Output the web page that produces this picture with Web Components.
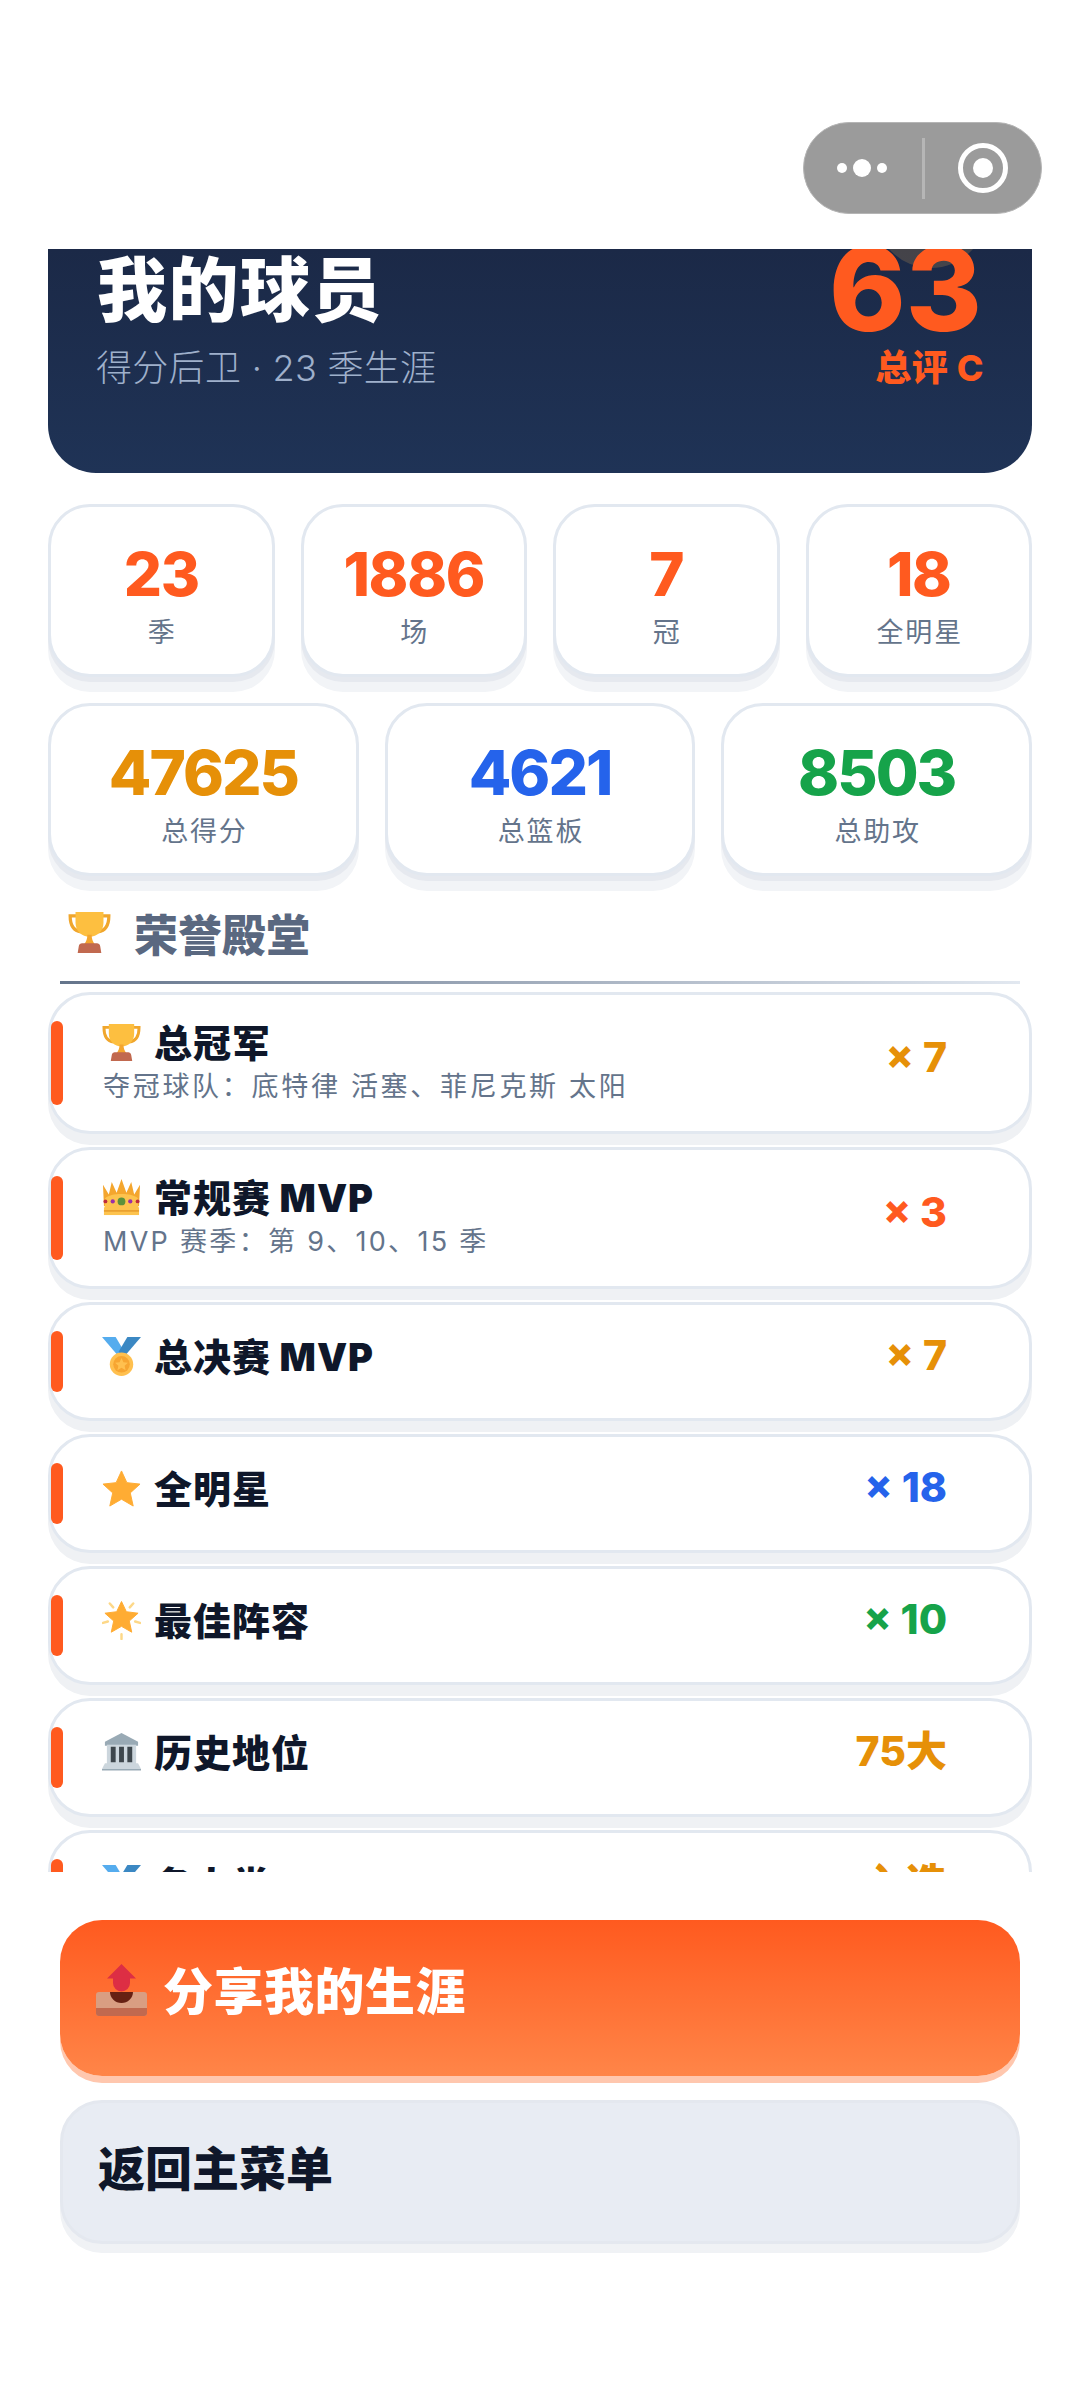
<!DOCTYPE html>
<html lang="zh-CN">
<head>
<meta charset="utf-8">
<title>我的球员</title>
<style>
html,body{margin:0;padding:0;background:#fff}
body{font-family:Inter,"Noto Sans CJK SC",sans-serif;color:#0f172a}
</style>
</head>
<body>
<career-app></career-app>
<script>
const ICONS={
trophy:`<svg viewBox="0 0 40 40"><path d="M8 4.500H2c0 8 3 14 10 15M32 4.500h6c0 8-3 14-10 15" fill="none" stroke="#f0a62c" stroke-width="3"/><path d="M7 1h26v10c0 8-6 13-13 13S7 19 7 11z" fill="#fdbf40"/><path d="M18 22h4c0 4 1 6 3 9H15c2-3 3-5 3-9z" fill="#f4a62e"/><path d="M9 39l1-6c0-2 2-3 3-3h14c1 0 3 1 3 3l1 6z" fill="#c1694f"/></svg>`,
crown:`<svg viewBox="0 0 40 40"><path d="M1 7l6 10 3-13 5 11 5-14 5 14 5-11 3 13 6-10-1 22H2z" fill="#f4a62e"/><path d="M3 21c6-6 28-6 34 0v10H3z" fill="#fdc34e"/><rect x="2" y="30" width="36" height="8" fill="#fdc34e"/><rect x="2" y="33" width="36" height="1.500" fill="#e69a2a"/><circle cx="3.500" cy="24" r="2" fill="#be2b3c"/><circle cx="11" cy="24" r="2.200" fill="#9b2fa8"/><circle cx="20" cy="24" r="4" fill="#5c913b"/><circle cx="29" cy="24" r="2.200" fill="#9b2fa8"/><circle cx="36.500" cy="24" r="2" fill="#be2b3c"/></svg>`,
medal:`<svg viewBox="0 0 40 40"><path d="M0 0h14l9 15-5 6z" fill="#55acee"/><path d="M40 0H26l-9 15 5 6z" fill="#3b88c3"/><circle cx="20" cy="28" r="12" fill="#ffc04f"/><circle cx="20" cy="28" r="8.500" fill="#f7a531"/><path d="M20 21.500l2 4.300 4.600.5-3.400 3.100 1 4.600-4.200-2.400-4.200 2.400 1-4.600-3.400-3.100 4.600-.5z" fill="#ffc04f"/></svg>`,
star:`<svg viewBox="0 0 40 40"><path d="M20 2l5.500 12 13.500 1.500-10 9 3 13.500-12-7-12 7 3-13.500-10-9L14.500 14z" fill="#ffac33" stroke="#ffac33" stroke-linejoin="round" stroke-width="1"/></svg>`,
glow:`<svg viewBox="0 0 40 40"><g stroke="#fdd888" stroke-width="2.500" stroke-linecap="round"><path d="M8 2.500l3.500 4M32 2.500l-3.500 4M1 22.500l5-1.500M39 22.500l-5-1.500M20 34v5"/></g><path d="M20 .5l5 10.500 12 1.500-9 8 2.500 11.500-10.500-6-10.500 6 2.500-11.500-9-8 12-1.500z" fill="#ffac33" stroke="#ffac33" stroke-linejoin="round" stroke-width="1"/></svg>`,
bank:`<svg viewBox="0 0 40 40"><path d="M20 0L3 9v4h34V9z" fill="#99aab5"/><rect x="5" y="12" width="30" height="20" fill="#ccd6dd"/><path d="M9 14h5v16H9zM17.500 14h5v16h-5zM26 14h5v16h-5z" fill="#3e474d"/><path d="M3 31h34l3 6v1H0v-1z" fill="#ccd6dd"/><path d="M0 37h40v1.500H0z" fill="#99aab5"/></svg>`,
outbox:`<svg viewBox="0 0 52 52"><rect x="0" y="28" width="51" height="24" rx="3" fill="#d99e82"/><path d="M0 44h51v5a3 3 0 0 1-3 3H3a3 3 0 0 1-3-3z" fill="#c1694f"/><path d="M14 28h23a11.500 11 0 0 1-23 0z" fill="#662113"/><path d="M25.500 0L40 14.500H34V19a8.500 8.500 0 0 1-17 0V14.500H11z" fill="#dd2e44"/></svg>`
};
function def(name,css,html,extra){
  customElements.define(name,class extends HTMLElement{
    constructor(){super();const s=this.attachShadow({mode:"open"});
      s.innerHTML=`<style>${css}</style>`;this._html=html;}
    connectedCallback(){
      const s=this.shadowRoot;
      if(this._done)return;this._done=true;
      const t=document.createElement("template");
      t.innerHTML=typeof this._html==="function"?this._html(this):this._html;
      s.appendChild(t.content);
      if(extra)extra(this,s);
    }
  });
}
def("emoji-icon",`:host{display:inline-block;flex:none;line-height:0}svg{width:100%;height:100%;display:block}`,h=>ICONS[h.getAttribute("name")]);
def("wx-capsule",`
:host{position:absolute;left:803px;top:122px;width:239px;height:92px;box-sizing:border-box;background:#9b9b9b;border:1px solid #b5b5b5;border-radius:46px;display:flex;align-items:center;z-index:5}
.more{width:118px;box-sizing:border-box;flex:none;display:flex;align-items:center;justify-content:center;gap:6px;padding-right:3px}
i{display:block;background:#fff;border-radius:50%;width:10px;height:10px}
i.b{width:18px;height:18px}
.div{width:3px;height:61px;background:#b6b6b6;flex:none}
.close{flex:1;display:flex;align-items:center;justify-content:center}
svg{width:50px;height:50px;display:block}
`,`<div class="more"><i></i><i class="b"></i><i></i></div><div class="div"></div><div class="close"><svg viewBox="0 0 50 50"><circle cx="25" cy="25" r="22.500" fill="none" stroke="#fff" stroke-width="5"/><circle cx="25" cy="25" r="10" fill="#fff"/></svg></div>`);
def("player-hero",`
:host{display:flex;position:relative;height:224px;box-sizing:border-box;overflow:hidden;border-radius:0 0 48px 48px;background:linear-gradient(180deg,#1b2947,#1f3356);padding:0 48px 83px 48px;justify-content:space-between;align-items:flex-end;color:#fff;flex:none}
.glow{position:absolute;right:45px;top:-93px;width:112px;height:112px;border-radius:50%;background:rgba(237,176,86,.2)}
.l,.r{position:relative;display:flex;flex-direction:column}
.r{align-items:flex-end}
.name{font-size:70px;line-height:80px;font-weight:900;letter-spacing:1.500px;margin-left:1px;position:relative;top:-1px}
.sub{font-size:36px;line-height:44px;margin-top:14px;color:#9fb0cb;font-weight:300;letter-spacing:.3px}
.num{font-size:116px;line-height:84px;font-weight:800;color:#ff5a1f;margin-right:2px;letter-spacing:0}
.ovr{font-size:36px;line-height:44px;font-weight:800;color:#ff5a1f;margin-top:15px;margin-right:0;letter-spacing:.5px}
`,`<div class="glow"></div><div class="l"><div class="name"><slot name="name"></slot></div><div class="sub"><slot name="sub"></slot></div></div><div class="r"><div class="num"><slot name="num"></slot></div><div class="ovr"><slot name="ovr"></slot></div></div>`);
def("stat-card",`
:host{display:flex;flex-direction:column;align-items:center;height:173px;box-sizing:border-box;padding-top:32px;background:#fff;border:3px solid #e2e8f0;border-radius:42px;box-shadow:0 5px 0 #e6e9ef,0 15px 0 #f2f4f7;min-width:0}
.v{font-size:var(--fs,60px);line-height:70px;font-weight:800;color:var(--c,#ff5a1f);letter-spacing:var(--ls,-1.3px)}
.l{font-size:27px;line-height:36px;margin-top:6px;color:#64748b;letter-spacing:1.800px;margin-right:-2px;font-weight:400}
`,h=>`<div class="v" style="--c:${h.getAttribute("color")||"#ff5a1f"}"><slot name="v"></slot></div><div class="l"><slot></slot></div>`);
def("stat-row",`:host{display:grid;gap:26px;grid-template-columns:repeat(var(--n,4),minmax(0,1fr));margin-top:26px;flex:none}`,`<slot></slot>`);
def("section-head",`
:host{display:block;flex:none;margin:19px 12px 0}
.t{display:flex;align-items:center;height:75px;color:#5a6880;font-size:44px;font-weight:900;padding-left:8px;gap:23px}
emoji-icon{width:43px;height:43px}
.line{height:3px;margin-top:11px;background:linear-gradient(90deg,#64748b,#e2e8f0)}
`,`<div class="t"><emoji-icon name="trophy"></emoji-icon><span><slot></slot></span></div><div class="line"></div>`);
def("honor-row",`
:host{display:flex;position:relative;flex:none;box-sizing:border-box;background:#fff;border:3px solid #e2e8f0;border-radius:42px;box-shadow:0 11px 0 #eff1f4;margin-top:13px;padding:23px 82px 36px 51px;justify-content:space-between;align-items:center}
:host([first]){margin-top:8px}
.bar{position:absolute;left:0;top:26px;bottom:26px;width:12px;border-radius:6px;background:#ff5a1f}
.m{display:flex;flex-direction:column;min-width:0}
.h{display:flex;align-items:center;gap:13px;height:54px;box-sizing:border-box;padding-top:4px}
:host([sub]) .h{height:50px;padding-top:0}
emoji-icon{width:39px;height:39px;margin-top:-1px}
.t{font-size:38px;line-height:50px;font-weight:900;color:#0f172a;letter-spacing:1px}
.s{font-size:27px;line-height:27px;height:27px;margin-top:5px;margin-bottom:-5px;color:#64748b;letter-spacing:var(--ls,2.700px);font-weight:400;margin-left:1px;white-space:nowrap}
.v{font-size:41px;line-height:54px;font-weight:800;white-space:pre}
`,h=>`<div class="bar"></div><div class="m"><div class="h"><emoji-icon name="${h.getAttribute("icon")}"></emoji-icon><span class="t">${h.getAttribute("title")}</span></div>${h.hasAttribute("sub")?`<div class="s">${h.getAttribute("sub")}</div>`:""}</div><div class="v" style="color:${h.getAttribute("color")}">${h.getAttribute("value")}</div>`);
def("action-btn",`
:host{display:flex;align-items:center;box-sizing:border-box;flex:none;border-radius:42px}
:host([kind=primary]){height:156px;padding:0 0 20px 36px;gap:15px;color:#fff;background:linear-gradient(180deg,#ff5a1f,#ff8548);box-shadow:0 7px 0 #ffc7ae;font-size:50px;font-weight:900;letter-spacing:.5px}
:host([kind=ghost]){height:144px;margin-top:24px;padding:0 0 14px 35px;color:#0f172a;background:#e8ecf3;border:3px solid #e4e8ef;box-shadow:0 9px 0 #f0f2f5;font-size:47px;font-weight:900}
::slotted(emoji-icon){width:52px;height:52px;margin-top:4px}
`,`<slot></slot>`);
def("career-app",`
:host{display:flex;flex-direction:column;position:relative;width:1080px;height:2400px;background:#fff;overflow:hidden}
.top{height:249px;flex:none}
.scroll{height:1623px;flex:none;overflow:hidden;padding:0 48px;display:flex;flex-direction:column;box-sizing:border-box}
.foot{padding:48px 60px 0;display:flex;flex-direction:column}
`,`
<wx-capsule></wx-capsule>
<div class="top"></div>
<div class="scroll">
  <player-hero><span slot="name">我的球员</span><span slot="sub">得分后卫 · 23 季生涯</span><span slot="num">63</span><span slot="ovr">总评 C</span></player-hero>
  <stat-row style="margin-top:31px"><stat-card><span slot="v">23</span>季</stat-card><stat-card><span slot="v">1886</span>场</stat-card><stat-card><span slot="v">7</span>冠</stat-card><stat-card><span slot="v">18</span>全明星</stat-card></stat-row>
  <stat-row style="--n:3;--fs:62px;--ls:-2px"><stat-card color="#e69008"><span slot="v">47625</span>总得分</stat-card><stat-card color="#2563eb"><span slot="v">4621</span>总篮板</stat-card><stat-card color="#16a34a"><span slot="v">8503</span>总助攻</stat-card></stat-row>
  <section-head>荣誉殿堂</section-head>
  <honor-row first icon="trophy" title="总冠军" sub="夺冠球队：底特律 活塞、菲尼克斯 太阳" value="× 7" color="#e69008"></honor-row>
  <honor-row style="--ls:2.300px" icon="crown" title="常规赛 MVP" sub="MVP 赛季：第 9、10、15 季" value="× 3" color="#ff5a1f"></honor-row>
  <honor-row icon="medal" title="总决赛 MVP" value="× 7" color="#e69008"></honor-row>
  <honor-row icon="star" title="全明星" value="× 18" color="#2563eb"></honor-row>
  <honor-row icon="glow" title="最佳阵容" value="× 10" color="#16a34a"></honor-row>
  <honor-row icon="bank" title="历史地位" value="75大" color="#e69008"></honor-row>
  <honor-row icon="medal" title="名人堂" value="入选" color="#e69008"></honor-row>
</div>
<div class="foot">
  <action-btn kind="primary"><emoji-icon name="outbox"></emoji-icon>分享我的生涯</action-btn>
  <action-btn kind="ghost">返回主菜单</action-btn>
</div>`);
</script>
</body>
</html>
